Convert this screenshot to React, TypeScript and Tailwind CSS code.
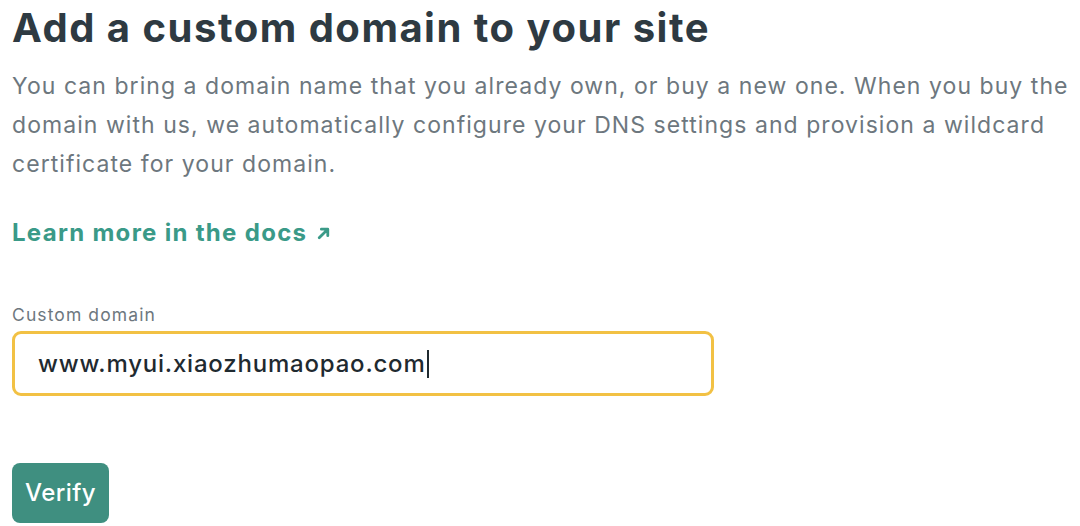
export default function App() {
  return (
    <div className="min-h-[526px] bg-white px-3 font-['Inter','Noto_Sans',sans-serif]">
      <h1 className="pt-[2px] text-[40px] leading-[52px] font-bold tracking-[1.5px] text-[#2e3a42]">
        Add a custom domain to your site
      </h1>
      <p className="mt-[13px] text-[23px] leading-[39px] tracking-[1.05px] whitespace-nowrap text-[#6d777e]">
        You can bring a domain name that you already own, or buy a new one. When you buy the
        <br />
        domain with us, we automatically configure your DNS settings and provision a wildcard
        <br />
        certificate for your domain.
      </p>
      <a href="#" className="mt-[33px] inline-flex items-center gap-[9px] text-[24px] leading-[32px] font-bold tracking-[1.3px] text-[#3a9a88]">
        Learn more in the docs
        <svg width="15" height="15" viewBox="0 0 14 14" fill="none" stroke="currentColor" strokeWidth="2.6" strokeLinecap="round" strokeLinejoin="round">
          <path d="M3 11L11 3M5 3h6v6" />
        </svg>
      </a>
      <div className="mt-[55px] flex flex-col">
        <label className="text-[17.5px] leading-[22px] tracking-[1.1px] text-[#6d777e]">Custom domain</label>
        <div className="mt-[5px] flex h-[65px] w-[702px] items-center rounded-[9px] border-[3px] border-[#f2c144] px-[23px]">
          <span className="text-[24px] font-medium tracking-[0.8px] text-[#1f2a30]">www.myui.xiaozhumaopao.com</span>
          <span className="ml-[1px] h-[28px] w-[2px] bg-[#1f2a30]" />
        </div>
      </div>
      <button className="mt-[67px] h-[60px] w-[97px] rounded-[8px] bg-[#3f8f80] text-[24px] font-medium tracking-[0.4px] text-white">
        Verify
      </button>
    </div>
  )
}
